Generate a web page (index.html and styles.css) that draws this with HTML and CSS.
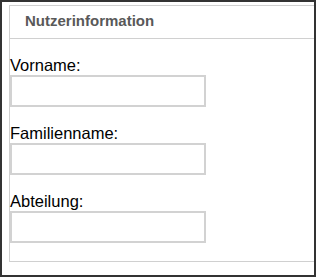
FILE: index.html
```html
<!DOCTYPE html>
<html lang="de">
<head>
    <meta charset="UTF-8">
    <meta name="viewport" content="width=device-width, initial-scale=1.0">
    <title>Nutzerinformation</title>
    <link rel="stylesheet" href="styles.css">
</head>
<body>

    <!-- Rahmen -->
    <div class="frame">
        <section class="panel">
            <div class="panel-header">Nutzerinformation</div>
            <form class="panel-body">
                <div class="form-group">
                    <label for="vorname">Vorname:</label>
                    <input type="text" id="vorname" name="vorname">
                </div>
                <div class="form-group">
                    <label for="familienname">Familienname:</label>
                    <input type="text" id="familienname" name="familienname">
                </div>
                <div class="form-group">
                    <label for="abteilung">Abteilung:</label>
                    <input type="text" id="abteilung" name="abteilung">
                </div>
            </form>
        </section>
    </div>

</body>
</html>
```

FILE: styles.css
```css
* {
    margin: 0;
    padding: 0;
    box-sizing: border-box;
}

body {
    font-family: 'Liberation Sans', Arial, sans-serif;
    background-color: #fff;
    color: #000;
}

.frame {
    width: 316px;
    height: 277px;
    border: 2px solid #333;
    padding: 3px 0 0 7px;
    overflow: hidden;
}

/* rechter Rand liegt unter dem Rahmen */
.panel {
    width: 320px;
    border: 1px solid #d0d0d0;
}

.panel-header {
    height: 33px;
    padding: 6px 15px 0;
    font-size: 15px;
    font-weight: bold;
    color: #595959;
    border-bottom: 1px solid #d0d0d0;
}

.panel-body {
    display: flex;
    flex-direction: column;
    gap: 17px;
    padding: 17px 0 18px;
}

.form-group {
    display: flex;
    flex-direction: column;
    align-items: flex-start;
}

.form-group label {
    font-size: 16.5px;
    line-height: 19px;
}

.form-group input {
    width: 196px;
    height: 32px;
    border: 2px solid #d2d2d2;
    background: #fff;
    outline: none;
}
```
